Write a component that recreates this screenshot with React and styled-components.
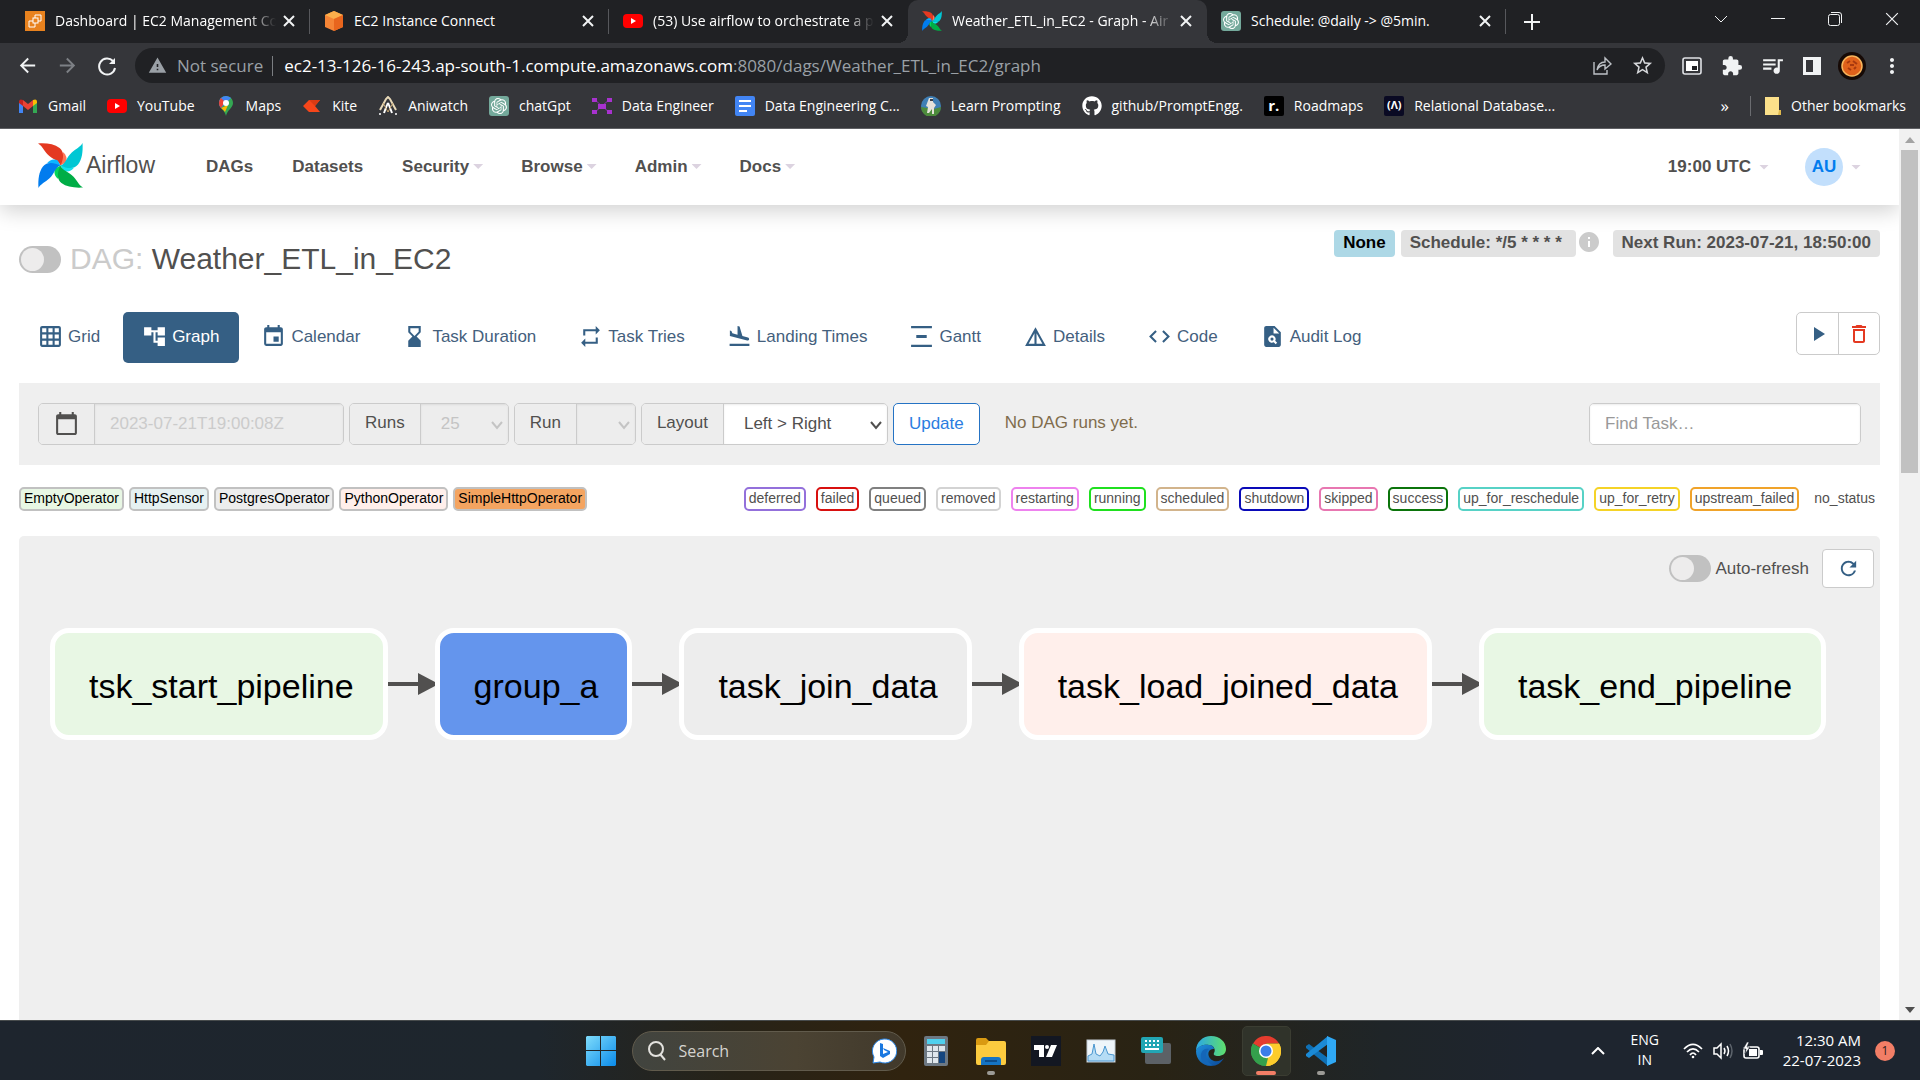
import React from "react";
import styled, { createGlobalStyle, css } from "styled-components";
import {
  MdGridOn, MdAccountTree, MdEvent, MdHourglassBottom, MdRepeat, MdFlightLand,
  MdVerticalDistribute, MdCode, MdPlagiarism, MdCalendarToday, MdPlayArrow,
  MdDeleteOutline, MdRefresh, MdInfo, MdArrowBack, MdArrowForward, MdStarBorder,
  MdExtension, MdQueueMusic, MdMoreVert, MdWarning,
} from "react-icons/md";
import { FaGithub } from "react-icons/fa";
import { SiOpenai } from "react-icons/si";

const uiFont = '"Open Sans", "Noto Sans", sans-serif';
const pageFont = '"Liberation Sans", Arial, sans-serif';

const GlobalStyle = createGlobalStyle`
  *, *::before, *::after { box-sizing: border-box; }
  body { margin: 0; background: #202124; }
  button, input, select { font: inherit; margin: 0; }
  a { color: inherit; text-decoration: none; }
  svg { display: block; flex: none; }
`;

const Screen = styled.div`
  display: flex;
  flex-direction: column;
  height: 100vh;
  overflow: hidden;
`;

/* ---------- browser window ---------- */

const Browser = styled.header`
  flex: none;
  background: #35363a;
  color: #fff;
  font: 14px/20px ${uiFont};
  border-bottom: 1px solid #5f6064;
`;

const TabStrip = styled.div`
  display: flex;
  height: 43px;
  padding-left: 11px;
  background: #202124;
`;

const Tab = styled.div`
  position: relative;
  display: flex;
  align-items: center;
  flex: 0 1 299px;
  min-width: 0;
  gap: 10px;
  padding: 0 12px 1px 14px;
  ${(p) => p.$line && css`
    &::after {
      content: "";
      position: absolute;
      right: 0;
      top: 9px;
      height: 25px;
      width: 1px;
      background: #57585c;
    }
  `}
  ${(p) => p.$active && css`
    background: #35363a;
    border-radius: 10px 10px 0 0;
    &::before, &::after {
      content: "";
      position: absolute;
      bottom: 0;
      width: 10px;
      height: 10px;
    }
    &::before { left: -10px; background: radial-gradient(circle at 0 0, transparent 10px, #35363a 10px); }
    &::after { right: -10px; background: radial-gradient(circle at 100% 0, transparent 10px, #35363a 10px); }
  `}
`;

const TabTitle = styled.span`
  flex: 1;
  min-width: 0;
  margin-right: -6px;
  padding-bottom: 1px;
  overflow: hidden;
  white-space: nowrap;
  ${(p) => p.$fade && css`mask-image: linear-gradient(90deg, #000 calc(100% - 28px), transparent);`}
`;

const IconButton = styled.button`
  display: grid;
  place-items: center;
  flex: none;
  width: ${(p) => p.$w || 40}px;
  height: ${(p) => p.$h || 30}px;
  padding: 0;
  border: 0;
  background: none;
  color: ${(p) => p.$color || "#f1f3f4"};
`;

const WindowControls = styled.div`
  display: flex;
  align-items: center;
  height: 37px;
  margin-left: auto;
`;

const Toolbar = styled.div`
  display: flex;
  align-items: center;
  height: 45px;
  padding: 0 8px 0 7px;
`;

const Omnibox = styled.div`
  display: flex;
  align-items: center;
  flex: 1;
  min-width: 0;
  height: 35px;
  margin: 0 7px 0 8px;
  padding: 0 3px 0 13px;
  border-radius: 18px;
  background: #202124;
  color: #9aa0a6;
  font-size: 17px;
  line-height: 24px;
`;

const Security = styled.button`
  display: flex;
  align-items: center;
  gap: 10px;
  height: 20px;
  padding: 0 9px 0 0;
  border: 0;
  border-right: 1px solid #7b7e82;
  background: none;
  color: #9aa0a6;
`;

const Address = styled.div`
  flex: 1;
  min-width: 0;
  margin-left: 11px;
  overflow: hidden;
  white-space: nowrap;
  outline: 0;
`;

const Host = styled.span`color: #fff;`;

const Bookmarks = styled.nav`
  display: flex;
  align-items: center;
  gap: 21px;
  height: 40px;
  padding: 0 14px 4px 18px;
  white-space: nowrap;
`;

const Bookmark = styled.a`
  display: flex;
  align-items: center;
  gap: 10px;
  ${(p) => p.$last && css`
    padding-left: 14px;
    border-left: 1px solid #6b6c70;
  `}
`;

const Overflow = styled.button`
  margin-left: auto;
  padding: 0;
  border: 0;
  background: none;
  color: #fff;
  font-size: 17px;
  line-height: 20px;
`;

const GptTile = styled.span`
  display: grid;
  place-items: center;
  width: 20px;
  height: 20px;
  border-radius: 3px;
  background: #74a99b;
  color: #fff;
`;

const LetterTile = styled.span`
  width: 20px;
  height: 20px;
  border-radius: 2px;
  background: ${(p) => p.$bg};
  color: #fff;
  font: 700 ${(p) => p.$size}px/18px ${uiFont};
  text-align: center;
`;

/* ---------- web page ---------- */

const Viewport = styled.div`
  display: flex;
  flex: 1;
  min-height: 0;
  background: #fff;
`;

const Page = styled.div`
  display: flex;
  flex-direction: column;
  flex: 1;
  min-width: 0;
  overflow: hidden;
  background: #fff;
  color: #51504f;
  font: 17px/24px ${pageFont};
`;

const NavBar = styled.nav`
  display: flex;
  align-items: center;
  flex: none;
  height: 76px;
  padding: 0 38px;
  background: #fff;
  box-shadow: 0 6px 20px rgba(0, 0, 0, 0.18);
  font-weight: 700;
`;

const Brand = styled.a`
  display: flex;
  align-items: center;
  gap: 3px;
  width: 168px;
  padding-bottom: 4px;
  font-size: 23px;
  font-weight: 400;
`;

const NavLink = styled.a`
  display: flex;
  align-items: center;
  gap: 4px;
  padding-bottom: 1px;
  margin-right: ${(p) => (p.$menu ? 38 : 39)}px;
`;

const Caret = styled.span`
  width: 10px;
  height: 5px;
  background: #dcd3e0;
  clip-path: polygon(0 0, 100% 0, 50% 100%);
`;

const NavRight = styled.div`
  display: flex;
  align-items: center;
  gap: 36px;
  margin-left: auto;
`;

const NavMenu = styled.button`
  display: flex;
  align-items: center;
  gap: 8px;
  padding: 0;
  border: 0;
  background: none;
  color: inherit;
`;

const Avatar = styled.span`
  width: 38px;
  height: 38px;
  border-radius: 50%;
  background: #c2dffc;
  color: #017cee;
  line-height: 37px;
  text-align: center;
`;

const Content = styled.main`
  display: flex;
  flex-direction: column;
  flex: 1;
  min-height: 0;
  padding: 25px 19px 0;
`;

const TitleRow = styled.div`
  display: flex;
  justify-content: space-between;
  align-items: flex-start;
  height: 82px;
`;

const TitleGroup = styled.div`
  display: flex;
  align-items: center;
  gap: 9px;
  padding-top: 12px;
`;

const Title = styled.h1`
  margin: 0;
  font-size: 30px;
  line-height: 34px;
  font-weight: 400;
`;

const Muted = styled.span`color: #cbcbcb;`;

const SwitchLabel = styled.label`
  display: flex;
  align-items: center;
  gap: 4px;
`;

const Switch = styled.input`
  appearance: none;
  display: flex;
  align-items: center;
  width: 42px;
  height: 27px;
  padding: 2px;
  border-radius: 14px;
  background: #c1c1c1;
  &::before {
    content: "";
    width: 23px;
    height: 23px;
    border-radius: 50%;
    background: #edecec;
  }
`;

const Badges = styled.div`
  display: flex;
  align-items: flex-start;
  gap: 6px;
`;

const Badge = styled.span`
  height: 27px;
  padding: 0 9px;
  border-radius: 4px;
  background: ${(p) => p.$bg || "#e2e2e2"};
  color: ${(p) => p.$color || "inherit"};
  font-weight: 700;
  font-size: 17px;
  line-height: 25px;
  white-space: pre;
`;

const ScheduleInfo = styled.div`
  display: flex;
  gap: 1px;
  margin-right: 6px;
  color: #cbcbcb;
`;

const ViewRow = styled.div`
  display: flex;
  justify-content: space-between;
  align-items: flex-start;
  height: 71px;
`;

const Views = styled.nav`
  display: flex;
  gap: 3px;
`;

const ViewTab = styled.a`
  display: flex;
  align-items: center;
  gap: 5px;
  height: 51px;
  padding: 0 20px 2px 19px;
  border-radius: 5px;
  background: ${(p) => (p.$active ? "#355f84" : "transparent")};
  color: ${(p) => (p.$active ? "#fff" : "#44607d")};
  svg { color: ${(p) => (p.$active ? "#fff" : "#355f84")}; }
`;

const ButtonGroup = styled.div`
  display: flex;
  border: 1px solid #cbcbcb;
  border-radius: 5px;
  background: #fff;
`;

const GroupButton = styled.button`
  display: grid;
  place-items: center;
  width: 41px;
  height: 41px;
  padding: 0;
  border: 0;
  background: none;
  color: ${(p) => p.$color};
  & + & { border-left: 1px solid #cbcbcb; }
`;

const FilterBar = styled.form`
  display: flex;
  align-items: center;
  gap: 5px;
  height: 82px;
  padding: 0 19px;
  background: #efefef;
`;

const Field = styled.div`
  display: flex;
  height: 42px;
  border: 1px solid #cbcbcb;
  border-radius: 5px;
  overflow: hidden;
`;

const Addon = styled.label`
  display: grid;
  place-items: center;
  padding: 0 15px 2px;
  background: #ededed;
  border-right: 1px solid #cbcbcb;
`;

const TextInput = styled.input`
  width: ${(p) => p.$w}px;
  padding: 0 15px;
  border: 0;
  outline: 0;
  background: ${(p) => (p.disabled ? "#ededed" : "#fff")};
  box-shadow: inset 0 1px 2px rgba(0, 0, 0, 0.08);
  color: #cbcbcb;
  &::placeholder { color: #999; opacity: 1; }
`;

const SelectWrap = styled.div`
  position: relative;
  display: flex;
  color: ${(p) => (p.$off ? "#c4c4c4" : "#51504f")};
  svg {
    position: absolute;
    right: 5px;
    top: 15px;
    pointer-events: none;
  }
`;

const Select = styled.select`
  appearance: none;
  width: ${(p) => p.$w}px;
  padding: 0 20px;
  border: 0;
  outline: 0;
  background: ${(p) => (p.disabled ? "#ededed" : "#fff")};
  box-shadow: inset 0 1px 2px rgba(0, 0, 0, 0.08);
  color: inherit;
  opacity: 1;
`;

const UpdateButton = styled.button`
  height: 42px;
  padding: 0 15px;
  border: 1px solid #2573c4;
  border-radius: 5px;
  background: #fff;
  color: #2a7de1;
`;

const Notice = styled.span`
  margin-left: 20px;
  padding-bottom: 2px;
  color: #806c4c;
`;

const Search = styled(Field)`margin-left: auto;`;

const Legend = styled.div`
  display: flex;
  justify-content: space-between;
  align-items: center;
  height: 71px;
  padding-bottom: 3px;
  font-size: 14px;
  line-height: 20px;
`;

const Operators = styled.div`
  display: flex;
  gap: 5px;
  color: #000;
`;

const States = styled.div`
  display: flex;
  gap: 10px;
`;

const Operator = styled.span`
  height: 24px;
  padding: 0 3px;
  border: 2px solid #c1c1c1;
  border-radius: 5px;
  background: ${(p) => p.$bg};
  line-height: 19px;
`;

const State = styled.button`
  height: 24px;
  padding: 0 3px 1px;
  border: 2px solid ${(p) => p.$color};
  border-radius: 5px;
  background: #fff;
  color: #51504f;
  line-height: 19px;
`;

const GraphPanel = styled.section`
  flex: 1;
  padding: 13px 6px 0 31px;
  border-radius: 5px 5px 0 0;
  background: #efefef;
`;

const GraphTools = styled.div`
  display: flex;
  justify-content: flex-end;
  align-items: center;
  gap: 13px;
  height: 39px;
`;

const RefreshButton = styled.button`
  display: grid;
  place-items: center;
  width: 52px;
  height: 39px;
  padding: 0;
  border: 1px solid #cbcbcb;
  border-radius: 4px;
  background: #fff;
  color: #355f84;
`;

const Graph = styled.div`
  display: flex;
  align-items: center;
  margin-top: 40px;
`;

const Node = styled.div`
  height: 112px;
  padding: 5px 29px 0 34px;
  border: 5px solid #fff;
  border-radius: 19px;
  background: ${(p) => p.$bg};
  color: #000;
  font-size: 34px;
  line-height: 97px;
  white-space: nowrap;
`;

const ScrollBar = styled.div`
  display: flex;
  flex-direction: column;
  align-items: center;
  width: 21px;
  background: #f1f1f1;
`;

const ScrollArrow = styled.span`
  display: grid;
  place-items: center;
  height: 21px;
  color: ${(p) => p.$color};
`;

const ScrollTrack = styled.div`
  flex: 1;
  width: 17px;
`;

const ScrollThumb = styled.div`
  height: 38%;
  background: #c1c1c1;
`;

/* ---------- taskbar ---------- */

const TaskBar = styled.footer`
  display: grid;
  grid-template-columns: 1fr auto 1fr;
  align-items: center;
  flex: none;
  height: 60px;
  border-top: 1px solid #474b4c;
  background: linear-gradient(90deg, #1e252e 0, #1e262d 28%, #272318 38%, #30230f 47%, #292314 60%, #1f2528 72%, #1e252f 80%);
  color: #fff;
  font: 14px/20px ${uiFont};
`;

const Dock = styled.div`
  grid-column: 2;
  display: flex;
  align-items: center;
  padding-left: 14px;
`;

const StartButton = styled(IconButton)`margin-right: 16px;`;

const SearchBox = styled.label`
  display: flex;
  align-items: center;
  gap: 12px;
  width: 274px;
  height: 40px;
  margin-right: 3px;
  padding: 0 8px 0 14px;
  border: 1px solid #615b4c;
  border-radius: 20px;
  background: linear-gradient(90deg, #41443f, #4b4333 60%, #41392b);
`;

const SearchInput = styled.input`
  flex: 1;
  min-width: 0;
  padding: 0;
  border: 0;
  outline: 0;
  background: none;
  color: #d5d3cf;
  font-size: 16px;
  &::placeholder { color: #d5d3cf; opacity: 1; }
`;

const DockButton = styled.button`
  position: relative;
  display: grid;
  place-items: center;
  width: 49px;
  height: 50px;
  margin: 0 3px;
  padding: 0;
  border: 1px solid ${(p) => (p.$active ? "#3b3d32" : "transparent")};
  border-radius: 5px;
  background: ${(p) => (p.$active ? "#30332a" : "none")};
  ${(p) => p.$mark && css`
    &::after {
      content: "";
      position: absolute;
      bottom: 0;
      left: calc(50% - ${p.$mark / 2}px);
      width: ${p.$mark}px;
      height: 4px;
      border-radius: 2px;
      background: ${p.$active ? "#f27e66" : "#9c9b96"};
    }
  `}
`;

const Tray = styled.div`
  display: flex;
  align-items: center;
  justify-content: flex-end;
  padding-right: 25px;
`;

const Language = styled.div`
  width: 32px;
  margin: 0 22px 0 24px;
  padding-bottom: 1px;
  text-align: center;
`;

const TrayIcons = styled.div`
  display: flex;
  align-items: center;
  gap: 10px;
`;

const Clock = styled.div`
  margin: 0 14px 0 20px;
  padding-bottom: 1px;
  font-size: 15px;
  text-align: right;
`;

const Count = styled.span`
  width: 20px;
  height: 20px;
  border-radius: 50%;
  background: #f27e66;
  color: #2a1c1c;
  font-size: 12px;
  text-align: center;
`;

/* ---------- drawings ---------- */

const blades = [
  ["#e43921", "#ff7557"],
  ["#00c7d4", "#11e1ee"],
  ["#00ad46", "#04d659"],
  ["#017cee", "#0cb6ff"],
];

const Pinwheel = ({ size }) => (
  <svg width={size} height={size} viewBox="0 0 100 100" aria-hidden="true">
    {blades.map(([dark, light], i) => (
      <g key={dark} transform={`rotate(${i * 90} 50 50)`}>
        <path fill={light} d="M55 20C63 26 66 36 61 44L50 50Z" />
        <path fill={dark} d="M0 1C20 0 36 2 48 11C58 19 58 34 50 50C46 38 32 37 21 25C13 16 9 6 0 1Z" />
      </g>
    ))}
  </svg>
);

const Cross = ({ size = 12, w = 2 }) => (
  <svg width={size} height={size} viewBox="0 0 12 12" stroke="currentColor" strokeWidth={w}>
    <path d="M1 1L11 11M11 1L1 11" />
  </svg>
);

const YouTube = () => (
  <svg width="20" height="20" viewBox="0 0 20 20">
    <rect y="3" width="20" height="14" rx="4" fill="#f00" />
    <path d="M8 7L13 10L8 13Z" fill="#fff" />
  </svg>
);

const Ec2 = () => (
  <svg width="20" height="20" viewBox="0 0 20 20">
    <rect width="20" height="20" fill="#e8821e" />
    <g fill="none" stroke="#fff" strokeWidth="1">
      <rect x="8" y="7" width="5" height="5" />
      <path d="M10 7V4H16V10H13M6 10H4V16H10V12M6 10H8" />
    </g>
  </svg>
);

const Cube = () => (
  <svg width="20" height="20" viewBox="0 0 20 20">
    <path d="M10 0L19 4V16L10 20L1 16V4Z" fill="#f58536" />
    <path d="M10 0L19 4L10 8L1 4Z" fill="#fbae4b" />
    <path d="M10 8L19 4V16L10 20Z" fill="#e8651d" />
  </svg>
);

const Gmail = () => (
  <svg width="20" height="20" viewBox="0 0 20 20">
    <path d="M1 6V17H5V9Z" fill="#4285f4" />
    <path d="M19 6V17H15V9Z" fill="#34a853" />
    <path d="M5 4V10L10 14L15 10V4L10 8Z" fill="#ea4335" />
    <path d="M1 6C1 3 3 3 5 4V10L1 7Z" fill="#c5221f" />
    <path d="M19 6C19 3 17 3 15 4V10L19 7Z" fill="#fbbc04" />
  </svg>
);

const Maps = () => (
  <svg width="20" height="20" viewBox="0 0 20 20">
    <path d="M10 0C14 0 17 3 17 7C17 12 11 14 10 20C9 14 3 12 3 7C3 3 6 0 10 0Z" fill="#34a853" />
    <path d="M3 7C3 3 6 0 10 0C12 0 14 1 15 2L5 12C4 11 3 9 3 7Z" fill="#4285f4" />
    <path d="M3 7C3 5 4 3 5 2L9 6L5 12C4 11 3 9 3 7Z" fill="#ea4335" />
    <path d="M5 12L12 9L9 16C8 14 6 13 5 12Z" fill="#fbbc04" />
    <circle cx="10" cy="7" r="3" fill="#fff" />
  </svg>
);

const Kite = () => (
  <svg width="20" height="20" viewBox="0 0 20 20">
    <path d="M7 4H18L13 10L18 16H7L1 10Z" fill="#f6461a" />
    <path d="M18 4L13 10L7 4Z" fill="#d93b14" />
  </svg>
);

const Aniwatch = () => (
  <svg width="20" height="20" viewBox="0 0 20 20" fill="none" strokeWidth="2">
    <path d="M2 14L8 3L10 1L12 3L18 14" stroke="#e8d9b8" />
    <path d="M6 17L9 9Q10 6 11 9L14 17" stroke="#fff" />
    <path d="M10 16L5 7M10 16L15 7" stroke="#c9a974" strokeWidth="1" />
    <circle cx="2" cy="18" r="1" fill="#fff" stroke="none" />
    <circle cx="18" cy="18" r="1" fill="#fff" stroke="none" />
  </svg>
);

const Nodes = () => (
  <svg width="20" height="20" viewBox="0 0 20 20" fill="#a832cf">
    <path d="M2 3L18 17M18 3L2 17" stroke="#8a2fb0" strokeWidth="1" />
    <rect x="0" y="2" width="5" height="4" />
    <rect x="15" y="2" width="5" height="4" />
    <rect x="0" y="14" width="5" height="4" />
    <rect x="15" y="14" width="5" height="4" />
    <rect x="6" y="8" width="8" height="5" />
  </svg>
);

const Docs = () => (
  <svg width="20" height="20" viewBox="0 0 20 20">
    <rect width="20" height="20" rx="2" fill="#4285f4" />
    <path d="M4 5H16M4 10H16M4 15H12" stroke="#fff" strokeWidth="2" />
  </svg>
);

const Astronaut = () => (
  <svg width="20" height="20" viewBox="0 0 20 20">
    <circle cx="10" cy="10" r="10" fill="#3f7fb5" />
    <path d="M0 11A10 10 0 0 0 20 11L13 13Z" fill="#4d8b3c" />
    <path d="M8 2H12V6L15 9L13 12V18H11V13L8 17H6L7 11L5 10Z" fill="#e6e2da" />
    <path d="M9 3H12V5H9Z" fill="#3a3f48" />
  </svg>
);

const FolderNote = () => (
  <svg width="16" height="20" viewBox="0 0 16 20">
    <path d="M0 1H14V14H16V19H0Z" fill="#fbe08a" />
    <path d="M14 14H16V19H13Z" fill="#e0b94c" />
  </svg>
);

const Reload = () => (
  <svg width="20" height="20" viewBox="0 0 20 20" fill="none" stroke="currentColor" strokeWidth="2">
    <path d="M16 5A8 8 0 1 0 18 12" />
    <path d="M18 2V8H12Z" fill="currentColor" stroke="none" />
  </svg>
);

const Share = () => (
  <svg width="20" height="20" viewBox="0 0 20 20" fill="none" stroke="currentColor" strokeWidth="1.4">
    <path d="M2 6V18H15V14" />
    <path d="M5 14C6 8 9 6 13 6V2L19 8L13 13V9C10 9 7 10 5 14Z" />
  </svg>
);

const Pip = () => (
  <svg width="20" height="20" viewBox="0 0 20 20">
    <rect x="1" y="2" width="18" height="16" rx="2" fill="none" stroke="#dfe1e5" strokeWidth="1.6" />
    <path d="M4 5H16V15H4Z" fill="#fff" />
    <rect x="10" y="10" width="5" height="4" fill="#202124" />
  </svg>
);

const SidePanel = () => (
  <svg width="20" height="20" viewBox="0 0 20 20">
    <rect x="1" y="1" width="18" height="18" fill="#f1f3f4" />
    <rect x="4" y="4" width="7" height="12" fill="#35363a" />
  </svg>
);

const Profile = () => (
  <svg width="28" height="28" viewBox="0 0 28 28">
    <circle cx="14" cy="14" r="14" fill="#160a06" />
    <circle cx="14" cy="14" r="10" fill="#e0611b" stroke="#f8b55c" strokeWidth="1.5" />
    <path d="M9 11L12 9M15 9L19 12M10 16L13 18M16 17L18 15M12 13H16" stroke="#a8390f" strokeWidth="2" />
  </svg>
);

const Details = () => (
  <svg width="25" height="25" viewBox="0 0 24 24" fill="currentColor">
    <path d="M12 3L2 21H22ZM13 8.9L18.600 19H13ZM11 8.9V19H5.400Z" />
  </svg>
);

const Chevron = () => (
  <svg width="12" height="12" viewBox="0 0 12 12" fill="none" stroke="currentColor" strokeWidth="2">
    <path d="M1 3L6 9L11 3" />
  </svg>
);

const EdgeLine = () => (
  <svg width="47" height="22" viewBox="0 0 47 22" fill="#51504f">
    <rect y="9" width="32" height="4" />
    <path d="M30 0L47 9V13L30 22Z" />
  </svg>
);

const Triangle = ({ up }) => (
  <svg width="10" height="6" viewBox="0 0 10 6" fill="currentColor">
    <path d={up ? "M0 6L5 0L10 6Z" : "M0 0H10L5 6Z"} />
  </svg>
);

const Windows = () => (
  <svg width="30" height="30" viewBox="0 0 30 30">
    <defs>
      <linearGradient id="win" x1="0" y1="0" x2="1" y2="1">
        <stop offset="0" stopColor="#7fdcfb" />
        <stop offset="1" stopColor="#0a8bea" />
      </linearGradient>
    </defs>
    <path fill="url(#win)" d="M1 0H14V14H0V1ZM15 0H29L30 1V14H15ZM0 15H14V30H1L0 29ZM15 15H30V29L29 30H15Z" />
  </svg>
);

const Magnifier = () => (
  <svg width="20" height="20" viewBox="0 0 20 20" fill="none" stroke="#e3e2de" strokeWidth="2">
    <circle cx="9" cy="8" r="7" />
    <path d="M13 13L18 19" />
  </svg>
);

const Bing = () => (
  <svg width="26" height="26" viewBox="0 0 26 26">
    <path d="M13 1A12 12 0 1 1 9 24L2 25L3 19A12 12 0 0 1 13 1Z" fill="#fff" stroke="#2b87e8" strokeWidth="1" />
    <path d="M9 5L12 6V16L17 14L13 12L12 10L19 13V16L12 20L9 18Z" fill="#1a78e0" />
  </svg>
);

const Calculator = () => (
  <svg width="30" height="30" viewBox="0 0 30 30">
    <rect x="3" width="24" height="30" rx="2" fill="#6d7883" />
    <rect x="6" y="3" width="18" height="5" fill="#4fd0ee" />
    <path fill="#dfe6ec" d="M6 10H11V15H6ZM12 10H17V15H12ZM18 10H24V15H18ZM6 16H11V21H6ZM12 16H17V21H12ZM6 22H11V27H6ZM12 22H17V27H12Z" />
    <rect x="18" y="16" width="6" height="11" fill="#15467f" />
  </svg>
);

const Explorer = () => (
  <svg width="30" height="30" viewBox="0 0 30 30">
    <path d="M0 4Q0 2 2 2H10L13 5H28V12H0Z" fill="#d99a12" />
    <path d="M0 9H10L13 5H28Q30 5 30 7V27Q30 29 28 29H2Q0 29 0 27Z" fill="#fccb3f" />
    <path d="M5 29V24Q5 21 8 21H22Q25 21 25 24V29Z" fill="#1574c4" />
    <path d="M9 25H21" stroke="#0c4d8c" strokeWidth="2" />
  </svg>
);

const TradingView = () => (
  <svg width="30" height="30" viewBox="0 0 30 30">
    <rect width="30" height="30" fill="#131722" />
    <path d="M3 9H13V21H8V14H3ZM20 9H26L21 21H15Z" fill="#fff" />
    <circle cx="16" cy="11" r="2" fill="#fff" />
  </svg>
);

const Monitor = () => (
  <svg width="30" height="30" viewBox="0 0 30 30">
    <rect x="1" y="4" width="28" height="22" fill="#eef5fa" stroke="#c3ccd3" />
    <path d="M2 20L6 18L8 8L10 18L14 20L17 16L19 10L22 18L28 19V25H2Z" fill="#b5dcf5" stroke="#4a96cf" />
  </svg>
);

const TouchKeyboard = () => (
  <svg width="30" height="30" viewBox="0 0 30 30">
    <rect x="4" y="7" width="26" height="21" rx="2" fill="#5c6166" />
    <rect x="0" y="1" width="22" height="16" rx="2" fill="#22a6b4" />
    <path d="M4 5H19M4 9H19" stroke="#fff" strokeWidth="2" strokeDasharray="2 2" />
    <path d="M4 13H18" stroke="#fff" strokeWidth="2" />
  </svg>
);

const Edge = () => (
  <svg width="30" height="30" viewBox="0 0 30 30">
    <defs>
      <linearGradient id="edgeTop" x1="0" x2="1">
        <stop offset="0" stopColor="#2aa7e6" />
        <stop offset="1" stopColor="#5fe06c" />
      </linearGradient>
      <linearGradient id="edgeLow" x1="0" y1="0" x2="1" y2="1">
        <stop offset="0" stopColor="#1e8fdc" />
        <stop offset="1" stopColor="#0b4796" />
      </linearGradient>
    </defs>
    <path d="M0 15C0 6 7 0 15 0C24 0 30 6 30 13C30 18 26 20 22 20C19 20 17 19 18 17C20 14 18 9 13 9C7 8 2 11 0 15Z" fill="url(#edgeTop)" />
    <path d="M0 15C2 10 7 8 13 9C16 9 18 11 18 13C11 12 10 22 18 25C22 26 26 24 28 22C25 27 21 30 15 30C6 30 0 23 0 15Z" fill="url(#edgeLow)" />
    <path d="M13 13C8 17 10 26 16 29C9 30 4 25 5 18C6 14 9 12 13 13Z" fill="#1466b8" />
  </svg>
);

const ChromeLogo = () => (
  <svg width="30" height="30" viewBox="0 0 30 30">
    <path d="M15 15L2 7.5A15 15 0 0 1 28 7.5H15Z" fill="#e53c2e" />
    <path d="M15 15L28 7.5A15 15 0 0 1 15 30Z" fill="#fccc2c" />
    <path d="M15 15L15 30A15 15 0 0 1 2 7.5Z" fill="#34a04c" />
    <path d="M15 7.5H28A15 15 0 0 1 15 30L21.5 18.8Z" fill="#fccc2c" />
    <path d="M2 7.5L8.5 18.8Q12 23 17 22L15 30A15 15 0 0 1 2 7.5Z" fill="#34a04c" />
    <circle cx="15" cy="15" r="7" fill="#fff" />
    <circle cx="15" cy="15" r="5.5" fill="#3b7de8" />
  </svg>
);

const VsCode = () => (
  <svg width="30" height="30" viewBox="0 0 30 30">
    <path d="M0 10L3 8L22 22V30L0 12Z" fill="#0f70b5" />
    <path d="M0 20L3 22L22 8V0L0 18Z" fill="#1b8ad6" />
    <path d="M21 0L30 4V26L21 30Z" fill="#2fa8f4" />
  </svg>
);

const Wifi = () => (
  <svg width="20" height="16" viewBox="0 0 20 16" fill="none" stroke="#fff" strokeWidth="1.7">
    <path d="M1 6Q10 -3 19 6M4 9Q10 3 16 9M7 12Q10 8 13 12" />
    <circle cx="10" cy="14" r="1.3" fill="#fff" stroke="none" />
  </svg>
);

const Speaker = () => (
  <svg width="20" height="18" viewBox="0 0 20 18" fill="none" stroke="#fff" strokeWidth="1.5">
    <path d="M1 6H4L8 2V16L4 12H1Z" />
    <path d="M11 6Q13 9 11 12M14 4Q17 9 14 14" />
    <path d="M17 2Q21 9 17 16" stroke="#5d646c" />
  </svg>
);

const Battery = () => (
  <svg width="20" height="18" viewBox="0 0 20 18">
    <rect x="1" y="5" width="15" height="11" rx="2" fill="none" stroke="#fff" strokeWidth="1.6" />
    <path d="M17 8H19Q20 8 20 9V12Q20 13 19 13H17Z" fill="#fff" />
    <rect x="6" y="7" width="8" height="7" fill="#fff" />
    <path d="M4 0L0 7H3L2 12L7 5H4L6 0Z" fill="#fff" stroke="#1e252f" strokeWidth="0.6" />
  </svg>
);

/* ---------- content ---------- */

const Gpt = () => <GptTile><SiOpenai size={16} /></GptTile>;

const tabs = [
  { title: "Dashboard | EC2 Management Co", icon: <Ec2 />, fade: true, line: true },
  { title: "EC2 Instance Connect", icon: <Cube />, line: true },
  { title: "(53) Use airflow to orchestrate a p", icon: <YouTube />, fade: true },
  { title: "Weather_ETL_in_EC2 - Graph - Air", icon: <Pinwheel size={20} />, fade: true, active: true },
  { title: "Schedule: @daily -> @5min.", icon: <Gpt />, line: true },
];

const bookmarks = [
  ["Gmail", <Gmail />],
  ["YouTube", <YouTube />],
  ["Maps", <Maps />],
  ["Kite", <Kite />],
  ["Aniwatch", <Aniwatch />],
  ["chatGpt", <Gpt />],
  ["Data Engineer", <Nodes />],
  ["Data Engineering C...", <Docs />],
  ["Learn Prompting", <Astronaut />],
  ["github/PromptEngg.", <FaGithub size={20} />],
  ["Roadmaps", <LetterTile $bg="#000" $size={15}>r.</LetterTile>],
  ["Relational Database...", <LetterTile $bg="#0a0a23" $size={11}>(Λ)</LetterTile>],
];

const menus = ["Security", "Browse", "Admin", "Docs"];

const views = [
  ["Grid", MdGridOn],
  ["Graph", MdAccountTree],
  ["Calendar", MdEvent],
  ["Task Duration", MdHourglassBottom],
  ["Task Tries", MdRepeat],
  ["Landing Times", MdFlightLand],
  ["Gantt", MdVerticalDistribute],
  ["Details", Details],
  ["Code", MdCode],
  ["Audit Log", MdPlagiarism],
];

const operators = [
  ["EmptyOperator", "#e8f7e4"],
  ["HttpSensor", "#e6f1f2"],
  ["PostgresOperator", "#ededed"],
  ["PythonOperator", "#ffefeb"],
  ["SimpleHttpOperator", "#f4a460"],
];

const states = [
  ["deferred", "mediumpurple"],
  ["failed", "#d8100f"],
  ["queued", "gray"],
  ["removed", "lightgrey"],
  ["restarting", "violet"],
  ["running", "#1fe01f"],
  ["scheduled", "tan"],
  ["shutdown", "#0a0ab8"],
  ["skipped", "#e877b1"],
  ["success", "#0b740b"],
  ["up_for_reschedule", "#57d2c6"],
  ["up_for_retry", "#f5d327"],
  ["upstream_failed", "#f0a32a"],
  ["no_status", "transparent"],
];

const nodes = [
  ["tsk_start_pipeline", "#e8f7e4"],
  ["group_a", "#6495ed"],
  ["task_join_data", "#ededed"],
  ["task_load_joined_data", "#ffefeb"],
  ["task_end_pipeline", "#e8f7e4"],
];

const dock = [
  { name: "Calculator", icon: <Calculator /> },
  { name: "File Explorer", icon: <Explorer />, mark: 8 },
  { name: "TradingView", icon: <TradingView /> },
  { name: "Monitor", icon: <Monitor /> },
  { name: "Touch keyboard", icon: <TouchKeyboard /> },
  { name: "Edge", icon: <Edge /> },
  { name: "Chrome", icon: <ChromeLogo />, mark: 20, active: true },
  { name: "VS Code", icon: <VsCode />, mark: 8 },
];

const BrowserChrome = () => (
  <Browser>
    <TabStrip>
      {tabs.map((t) => (
        <Tab key={t.title} $active={t.active} $line={t.line}>
          {t.icon}
          <TabTitle $fade={t.fade}>{t.title}</TabTitle>
          <IconButton $w={18} $h={18} aria-label="Close tab"><Cross /></IconButton>
        </Tab>
      ))}
      <IconButton $w={52} $h={43} aria-label="New tab">
        <svg width="16" height="16" viewBox="0 0 16 16" stroke="currentColor" strokeWidth="2"><path d="M8 0V16M0 8H16" /></svg>
      </IconButton>
      <WindowControls>
        <IconButton $w={57} aria-label="Search tabs">
          <svg width="14" height="8" viewBox="0 0 14 8" fill="none" stroke="currentColor"><path d="M1 1L7 7L13 1" /></svg>
        </IconButton>
        <IconButton $w={57} aria-label="Minimise">
          <svg width="14" height="2" viewBox="0 0 14 2"><path d="M0 0H14V1H0Z" fill="currentColor" /></svg>
        </IconButton>
        <IconButton $w={57} aria-label="Restore">
          <svg width="14" height="14" viewBox="0 0 14 14" fill="none" stroke="currentColor">
            <rect x="0.5" y="2.5" width="11" height="11" rx="2" />
            <path d="M3 .5H11Q13.500 .5 13.500 3V11" />
          </svg>
        </IconButton>
        <IconButton $w={57} aria-label="Close"><Cross size={14} w={1} /></IconButton>
      </WindowControls>
    </TabStrip>
    <Toolbar>
      <IconButton aria-label="Back"><MdArrowBack size={23} /></IconButton>
      <IconButton $color="#7d8085" aria-label="Forward"><MdArrowForward size={23} /></IconButton>
      <IconButton aria-label="Reload"><Reload /></IconButton>
      <Omnibox>
        <Security><MdWarning size={19} />Not secure</Security>
        <Address role="textbox" aria-label="Address" contentEditable suppressContentEditableWarning spellCheck={false}>
          <Host>ec2-13-126-16-243.ap-south-1.compute.amazonaws.com</Host>
          <span>:8080/dags/Weather_ETL_in_EC2/graph</span>
        </Address>
        <IconButton $color="#bdc1c6" aria-label="Share"><Share /></IconButton>
        <IconButton $color="#d5d7da" aria-label="Bookmark"><MdStarBorder size={23} /></IconButton>
      </Omnibox>
      <IconButton aria-label="Picture in picture"><Pip /></IconButton>
      <IconButton aria-label="Extensions"><MdExtension size={22} /></IconButton>
      <IconButton aria-label="Media"><MdQueueMusic size={25} /></IconButton>
      <IconButton aria-label="Side panel"><SidePanel /></IconButton>
      <IconButton aria-label="Profile"><Profile /></IconButton>
      <IconButton aria-label="Menu"><MdMoreVert size={24} /></IconButton>
    </Toolbar>
    <Bookmarks>
      {bookmarks.map(([name, icon]) => (
        <Bookmark key={name} href="#">{icon}{name}</Bookmark>
      ))}
      <Overflow>»</Overflow>
      <Bookmark href="#" $last><FolderNote />Other bookmarks</Bookmark>
    </Bookmarks>
  </Browser>
);

const Filters = () => (
  <FilterBar onSubmit={(e) => e.preventDefault()}>
    <Field>
      <Addon htmlFor="base-date" aria-label="Base date"><MdCalendarToday size={25} /></Addon>
      <TextInput id="base-date" $w={248} disabled defaultValue="2023-07-21T19:00:08Z" />
    </Field>
    <Field>
      <Addon htmlFor="runs">Runs</Addon>
      <SelectWrap $off>
        <Select id="runs" $w={87} disabled><option>25</option></Select>
        <Chevron />
      </SelectWrap>
    </Field>
    <Field>
      <Addon htmlFor="run">Run</Addon>
      <SelectWrap $off>
        <Select id="run" $w={58} disabled />
        <Chevron />
      </SelectWrap>
    </Field>
    <Field>
      <Addon htmlFor="layout">Layout</Addon>
      <SelectWrap>
        <Select id="layout" $w={163}><option>Left &gt; Right</option></Select>
        <Chevron />
      </SelectWrap>
    </Field>
    <UpdateButton>Update</UpdateButton>
    <Notice>No DAG runs yet.</Notice>
    <Search><TextInput $w={270} aria-label="Find task" placeholder="Find Task…" /></Search>
  </FilterBar>
);

const Airflow = () => (
  <Page>
    <NavBar>
      <Brand href="#"><Pinwheel size={45} />Airflow</Brand>
      <NavLink href="#">DAGs</NavLink>
      <NavLink href="#">Datasets</NavLink>
      {menus.map((m) => (
        <NavLink key={m} href="#" $menu>{m}<Caret /></NavLink>
      ))}
      <NavRight>
        <NavMenu>19:00 UTC<Caret /></NavMenu>
        <NavMenu><Avatar>AU</Avatar><Caret /></NavMenu>
      </NavRight>
    </NavBar>
    <Content>
      <TitleRow>
        <TitleGroup>
          <Switch type="checkbox" aria-label="Pause DAG" />
          <Title><Muted>DAG:</Muted> Weather_ETL_in_EC2</Title>
        </TitleGroup>
        <Badges>
          <Badge $bg="#add8e6" $color="#000">None</Badge>
          <ScheduleInfo>
            <Badge $color="#51504f">{"Schedule: */5 * * * * "}</Badge>
            <MdInfo size={24} />
          </ScheduleInfo>
          <Badge>Next Run: 2023-07-21, 18:50:00</Badge>
        </Badges>
      </TitleRow>
      <ViewRow>
        <Views>
          {views.map(([name, Icon]) => (
            <ViewTab key={name} href="#" $active={name === "Graph"}><Icon size={25} />{name}</ViewTab>
          ))}
        </Views>
        <ButtonGroup>
          <GroupButton $color="#355f84" aria-label="Trigger DAG"><MdPlayArrow size={24} /></GroupButton>
          <GroupButton $color="#e43921" aria-label="Delete DAG"><MdDeleteOutline size={24} /></GroupButton>
        </ButtonGroup>
      </ViewRow>
      <Filters />
      <Legend>
        <Operators>
          {operators.map(([name, bg]) => <Operator key={name} $bg={bg}>{name}</Operator>)}
        </Operators>
        <States>
          {states.map(([name, color]) => <State key={name} $color={color}>{name}</State>)}
        </States>
      </Legend>
      <GraphPanel>
        <GraphTools>
          <SwitchLabel><Switch type="checkbox" />Auto-refresh</SwitchLabel>
          <RefreshButton aria-label="Refresh"><MdRefresh size={23} /></RefreshButton>
        </GraphTools>
        <Graph>
          {nodes.map(([name, bg], i) => (
            <React.Fragment key={name}>
              {i > 0 && <EdgeLine />}
              <Node $bg={bg}>{name}</Node>
            </React.Fragment>
          ))}
        </Graph>
      </GraphPanel>
    </Content>
  </Page>
);

const WindowsBar = () => (
  <TaskBar>
    <Dock>
      <StartButton $w={30} aria-label="Start"><Windows /></StartButton>
      <SearchBox>
        <Magnifier />
        <SearchInput placeholder="Search" aria-label="Search" />
        <Bing />
      </SearchBox>
      {dock.map((d) => (
        <DockButton key={d.name} aria-label={d.name} $mark={d.mark} $active={d.active}>{d.icon}</DockButton>
      ))}
    </Dock>
    <Tray>
      <svg width="14" height="8" viewBox="0 0 14 8" fill="none" stroke="#fff" strokeWidth="2"><path d="M1 7L7 1L13 7" /></svg>
      <Language>ENG<br />IN</Language>
      <TrayIcons><Wifi /><Speaker /><Battery /></TrayIcons>
      <Clock>12:30 AM<br />22-07-2023</Clock>
      <Count>1</Count>
    </Tray>
  </TaskBar>
);

export default function App() {
  return (
    <Screen>
      <GlobalStyle />
      <BrowserChrome />
      <Viewport>
        <Airflow />
        <ScrollBar>
          <ScrollArrow $color="#a3a3a3"><Triangle up /></ScrollArrow>
          <ScrollTrack><ScrollThumb /></ScrollTrack>
          <ScrollArrow $color="#505050"><Triangle /></ScrollArrow>
        </ScrollBar>
      </Viewport>
      <WindowsBar />
    </Screen>
  );
}
